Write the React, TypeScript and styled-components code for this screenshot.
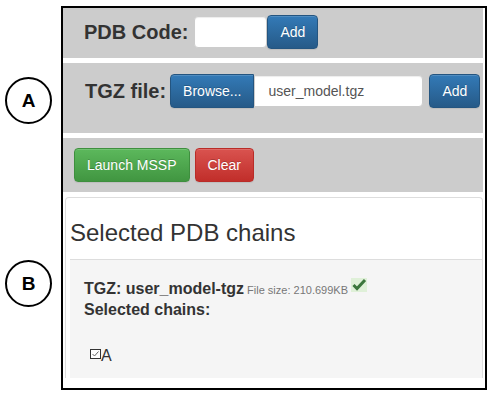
import styled, { createGlobalStyle, css } from "styled-components";

type Variant = "primary" | "success" | "danger";

const GlobalStyle = createGlobalStyle`
  html, body {
    margin: 0;
    padding: 0;
    background: #fff;
  }
  body {
    font-family: "Liberation Sans", Arial, Helvetica, sans-serif;
    color: #333;
  }
  * {
    box-sizing: border-box;
  }
`;

const Page = styled.div`
  display: flex;
  align-items: flex-start;
  width: 491px;
  height: 398px;
  padding-top: 6px;
`;

const Gutter = styled.div`
  width: 61px;
  display: flex;
  flex-direction: column;
  gap: 136px;
  padding: 71px 0 0 5px;
`;

const Marker = styled.div`
  width: 47px;
  height: 47px;
  border: 2px solid #000;
  border-radius: 50%;
  display: flex;
  align-items: center;
  justify-content: center;
  font-size: 19px;
  font-weight: bold;
  color: #000;
`;

const Frame = styled.div`
  width: 426px;
  height: 384px;
  border: 2px solid #000;
  display: flex;
  flex-direction: column;
  gap: 5px;
  padding: 0 2px 10px 0;
`;

const Bar = styled.div<{ $top: number; $bottom: number; $left: number }>`
  display: flex;
  align-items: center;
  background: #ccc;
  padding: ${(p) => p.$top}px 0 ${(p) => p.$bottom}px ${(p) => p.$left}px;
`;

const FieldLabel = styled.span<{ $gap: number }>`
  font-size: 20px;
  font-weight: bold;
  line-height: 23px;
  padding-top: 1px;
  color: #333;
  margin-right: ${(p) => p.$gap}px;
`;

const TextInput = styled.input<{ $width: number; $attached?: boolean }>`
  width: ${(p) => p.$width}px;
  height: 32px;
  border: 1px solid #ccc;
  border-radius: 4px;
  background: #fff;
  box-shadow: inset 0 1px 1px rgba(0, 0, 0, 0.075);
  padding: 0 0 0 13px;
  font-family: inherit;
  font-size: 14px;
  color: #555;
  outline: none;
  ${(p) =>
    p.$attached &&
    css`
      border-top-left-radius: 0;
      border-bottom-left-radius: 0;
    `}
`;

const variants: Record<Variant, ReturnType<typeof css>> = {
  primary: css`
    background-image: linear-gradient(to bottom, #337ab7 0, #265a88 100%);
    border-color: #245580;
  `,
  success: css`
    background-image: linear-gradient(to bottom, #5cb85c 0, #419641 100%);
    border-color: #3e8f3e;
  `,
  danger: css`
    background-image: linear-gradient(to bottom, #d9534f 0, #c12e2a 100%);
    border-color: #b92c28;
  `,
};

const Button = styled.button<{ $variant: Variant; $joinRight?: boolean; $ml?: number }>`
  font-family: inherit;
  font-size: 14px;
  line-height: 20px;
  padding: 6px 12px;
  border: 1px solid;
  border-radius: 4px;
  color: #fff;
  white-space: nowrap;
  text-shadow: 0 -1px 0 rgba(0, 0, 0, 0.2);
  box-shadow: inset 0 1px 0 rgba(255, 255, 255, 0.15), 0 1px 1px rgba(0, 0, 0, 0.075);
  cursor: pointer;
  margin-left: ${(p) => p.$ml ?? 0}px;
  ${(p) => variants[p.$variant]}
  ${(p) =>
    p.$joinRight &&
    css`
      border-top-right-radius: 0;
      border-bottom-right-radius: 0;
    `}
`;

const Panel = styled.div`
  flex: 1;
  margin-left: 2px;
  border: 1px solid #ddd;
  border-bottom: none;
  border-radius: 4px 4px 0 0;
  padding-left: 4px;
  display: flex;
  flex-direction: column;
  background: #fff;
`;

const PanelTitle = styled.h3`
  margin: 22px 0 13px;
  font-size: 24px;
  font-weight: normal;
  line-height: 26px;
  color: #333;
`;

const PanelBody = styled.div`
  flex: 1;
  background: #f5f5f5;
  border-top: 1px solid #ddd;
  padding: 18px 14px 0;
`;

const Line = styled.div<{ $mt?: number }>`
  font-size: 16px;
  line-height: 20px;
  margin-top: ${(p) => p.$mt ?? 0}px;
  white-space: nowrap;
`;

const Strong = styled.b`
  font-weight: bold;
  color: #333;
`;

const Small = styled.small`
  font-size: 11px;
  color: #777;
`;

const OkBadge = styled.svg`
  margin-left: 3px;
  vertical-align: 2px;
`;

const ChainBox = styled.svg`
  margin-left: 6px;
  vertical-align: 2px;
`;

export default function App() {
  return (
    <>
      <GlobalStyle />
      <Page>
        <Gutter>
          <Marker>A</Marker>
          <Marker>B</Marker>
        </Gutter>
        <Frame>
          <Bar $top={7} $bottom={9} $left={21}>
            <FieldLabel $gap={6}>PDB Code:</FieldLabel>
            <TextInput $width={73} />
            <Button $variant="primary">Add</Button>
          </Bar>
          <Bar $top={11} $bottom={25} $left={22}>
            <FieldLabel $gap={4}>TGZ file:</FieldLabel>
            <Button $variant="primary" $joinRight>
              Browse...
            </Button>
            <TextInput $width={169} $attached readOnly value="user_model.tgz" />
            <Button $variant="primary" $ml={6}>
              Add
            </Button>
          </Bar>
          <Bar $top={10} $bottom={10} $left={11}>
            <Button $variant="success">Launch MSSP</Button>
            <Button $variant="danger" $ml={5}>
              Clear
            </Button>
          </Bar>
          <Panel>
            <PanelTitle>Selected PDB chains</PanelTitle>
            <PanelBody>
              <Line>
                <Strong>TGZ: user_model-tgz</Strong>
                <Small> File size: 210.699KB</Small>
                <OkBadge width="16" height="14" viewBox="0 0 16 14">
                  <rect width="16" height="14" fill="#dff0d8" />
                  <polyline
                    points="2.5,7 6,10.5 14,2"
                    fill="none"
                    stroke="#3c763d"
                    strokeWidth="3"
                  />
                </OkBadge>
              </Line>
              <Line>
                <Strong>Selected chains:</Strong>
              </Line>
              <Line $mt={26}>
                <ChainBox width="11" height="10" viewBox="0 0 11 10">
                  <rect x="0.5" y="0.5" width="10" height="9" fill="#fff" stroke="#333" />
                  <polyline points="2.5,5 4.5,7 8.5,2.5" fill="none" stroke="#666" strokeWidth="1" />
                </ChainBox>
                A
              </Line>
            </PanelBody>
          </Panel>
        </Frame>
      </Page>
    </>
  );
}
